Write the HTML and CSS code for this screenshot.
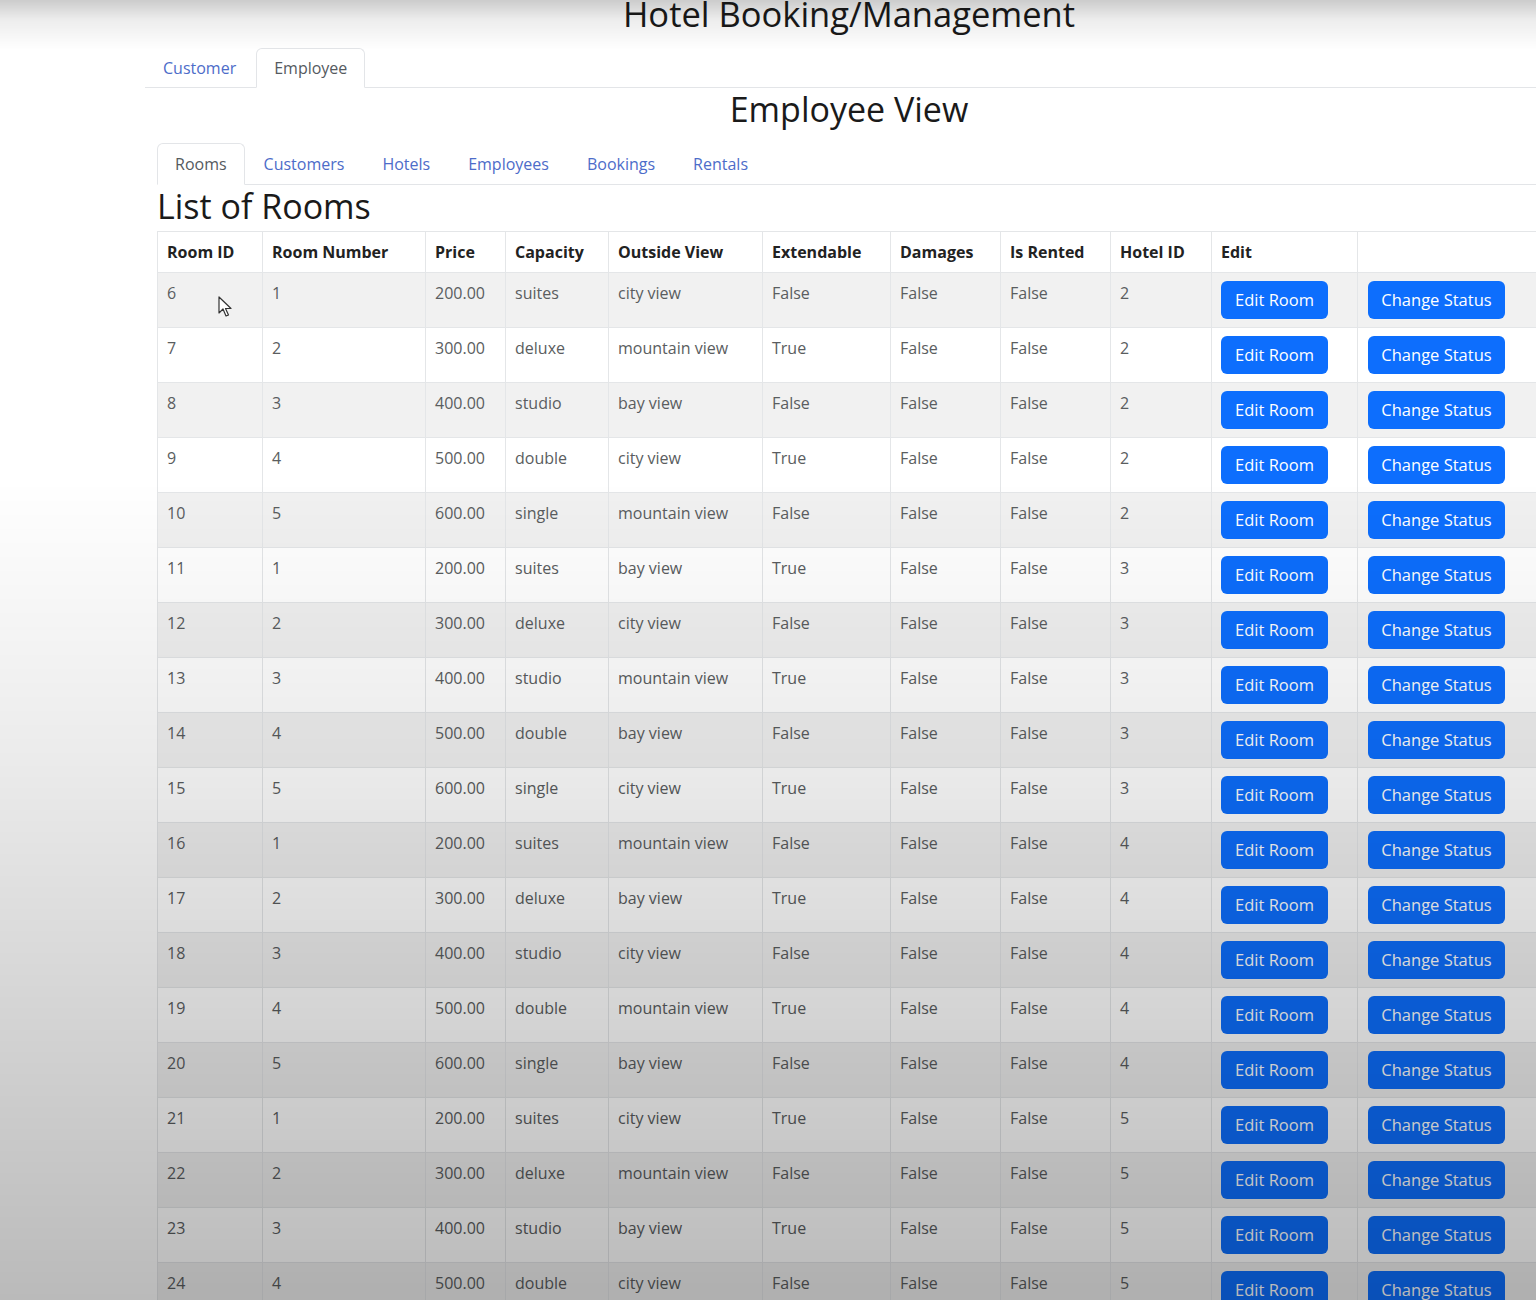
FILE: index.html
```html
<!DOCTYPE html>
<html lang="en">
<head>
<meta charset="utf-8">
<title>Hotel Booking/Management</title>
<link rel="stylesheet" href="styles.css">
</head>
<body>
<div class="page">
  <h1 class="title">Hotel Booking/Management</h1>
  <ul class="tabs top-tabs">
    <li><a class="tab-link">Customer</a></li>
    <li><a class="tab-link active">Employee</a></li>
  </ul>
  <section class="section">
    <h2 class="view-title">Employee View</h2>
    <ul class="tabs sub-tabs">
      <li><a class="tab-link active">Rooms</a></li>
      <li><a class="tab-link">Customers</a></li>
      <li><a class="tab-link">Hotels</a></li>
      <li><a class="tab-link">Employees</a></li>
      <li><a class="tab-link">Bookings</a></li>
      <li><a class="tab-link">Rentals</a></li>
    </ul>
    <h3 class="list-title">List of Rooms</h3>
    <table class="rooms">
      <colgroup>
        <col class="c-id"><col class="c-num"><col class="c-price"><col class="c-cap"><col class="c-view"><col class="c-ext"><col class="c-dmg"><col class="c-rent"><col class="c-hotel"><col class="c-edit"><col class="c-status">
      </colgroup>
      <thead>
        <tr><th>Room ID</th><th>Room Number</th><th>Price</th><th>Capacity</th><th>Outside View</th><th>Extendable</th><th>Damages</th><th>Is Rented</th><th>Hotel ID</th><th>Edit</th><th></th></tr>
      </thead>
      <tbody>
        <tr><td class="cursor-cell">6<svg class="cursor" width="14" height="22" viewBox="0 0 14 22"><path d="M1 1 L1 17 L5 13 L8 20 L10.5 19 L7.5 12.5 L13 12.5 Z" fill="#fff" stroke="#333" stroke-width="1.2" stroke-linejoin="round"/></svg></td><td>1</td><td>200.00</td><td>suites</td><td>city view</td><td>False</td><td>False</td><td>False</td><td>2</td><td><button class="btn btn-edit">Edit Room</button></td><td><button class="btn btn-status">Change Status</button></td></tr>
        <tr><td>7</td><td>2</td><td>300.00</td><td>deluxe</td><td>mountain view</td><td>True</td><td>False</td><td>False</td><td>2</td><td><button class="btn btn-edit">Edit Room</button></td><td><button class="btn btn-status">Change Status</button></td></tr>
        <tr><td>8</td><td>3</td><td>400.00</td><td>studio</td><td>bay view</td><td>False</td><td>False</td><td>False</td><td>2</td><td><button class="btn btn-edit">Edit Room</button></td><td><button class="btn btn-status">Change Status</button></td></tr>
        <tr><td>9</td><td>4</td><td>500.00</td><td>double</td><td>city view</td><td>True</td><td>False</td><td>False</td><td>2</td><td><button class="btn btn-edit">Edit Room</button></td><td><button class="btn btn-status">Change Status</button></td></tr>
        <tr><td>10</td><td>5</td><td>600.00</td><td>single</td><td>mountain view</td><td>False</td><td>False</td><td>False</td><td>2</td><td><button class="btn btn-edit">Edit Room</button></td><td><button class="btn btn-status">Change Status</button></td></tr>
        <tr><td>11</td><td>1</td><td>200.00</td><td>suites</td><td>bay view</td><td>True</td><td>False</td><td>False</td><td>3</td><td><button class="btn btn-edit">Edit Room</button></td><td><button class="btn btn-status">Change Status</button></td></tr>
        <tr><td>12</td><td>2</td><td>300.00</td><td>deluxe</td><td>city view</td><td>False</td><td>False</td><td>False</td><td>3</td><td><button class="btn btn-edit">Edit Room</button></td><td><button class="btn btn-status">Change Status</button></td></tr>
        <tr><td>13</td><td>3</td><td>400.00</td><td>studio</td><td>mountain view</td><td>True</td><td>False</td><td>False</td><td>3</td><td><button class="btn btn-edit">Edit Room</button></td><td><button class="btn btn-status">Change Status</button></td></tr>
        <tr><td>14</td><td>4</td><td>500.00</td><td>double</td><td>bay view</td><td>False</td><td>False</td><td>False</td><td>3</td><td><button class="btn btn-edit">Edit Room</button></td><td><button class="btn btn-status">Change Status</button></td></tr>
        <tr><td>15</td><td>5</td><td>600.00</td><td>single</td><td>city view</td><td>True</td><td>False</td><td>False</td><td>3</td><td><button class="btn btn-edit">Edit Room</button></td><td><button class="btn btn-status">Change Status</button></td></tr>
        <tr><td>16</td><td>1</td><td>200.00</td><td>suites</td><td>mountain view</td><td>False</td><td>False</td><td>False</td><td>4</td><td><button class="btn btn-edit">Edit Room</button></td><td><button class="btn btn-status">Change Status</button></td></tr>
        <tr><td>17</td><td>2</td><td>300.00</td><td>deluxe</td><td>bay view</td><td>True</td><td>False</td><td>False</td><td>4</td><td><button class="btn btn-edit">Edit Room</button></td><td><button class="btn btn-status">Change Status</button></td></tr>
        <tr><td>18</td><td>3</td><td>400.00</td><td>studio</td><td>city view</td><td>False</td><td>False</td><td>False</td><td>4</td><td><button class="btn btn-edit">Edit Room</button></td><td><button class="btn btn-status">Change Status</button></td></tr>
        <tr><td>19</td><td>4</td><td>500.00</td><td>double</td><td>mountain view</td><td>True</td><td>False</td><td>False</td><td>4</td><td><button class="btn btn-edit">Edit Room</button></td><td><button class="btn btn-status">Change Status</button></td></tr>
        <tr><td>20</td><td>5</td><td>600.00</td><td>single</td><td>bay view</td><td>False</td><td>False</td><td>False</td><td>4</td><td><button class="btn btn-edit">Edit Room</button></td><td><button class="btn btn-status">Change Status</button></td></tr>
        <tr><td>21</td><td>1</td><td>200.00</td><td>suites</td><td>city view</td><td>True</td><td>False</td><td>False</td><td>5</td><td><button class="btn btn-edit">Edit Room</button></td><td><button class="btn btn-status">Change Status</button></td></tr>
        <tr><td>22</td><td>2</td><td>300.00</td><td>deluxe</td><td>mountain view</td><td>False</td><td>False</td><td>False</td><td>5</td><td><button class="btn btn-edit">Edit Room</button></td><td><button class="btn btn-status">Change Status</button></td></tr>
        <tr><td>23</td><td>3</td><td>400.00</td><td>studio</td><td>bay view</td><td>True</td><td>False</td><td>False</td><td>5</td><td><button class="btn btn-edit">Edit Room</button></td><td><button class="btn btn-status">Change Status</button></td></tr>
        <tr><td>24</td><td>4</td><td>500.00</td><td>double</td><td>city view</td><td>False</td><td>False</td><td>False</td><td>5</td><td><button class="btn btn-edit">Edit Room</button></td><td><button class="btn btn-status">Change Status</button></td></tr>
      </tbody>
    </table>
  </section>
</div>
</body>
</html>
```

FILE: styles.css
```css
html, body {
  margin: 0;
  padding: 0;
  overflow: hidden;
  background: #ffffff;
}

body {
  font-family: "Open Sans", "Noto Sans", sans-serif;
  font-size: 16px;
  color: #212529;
  height: 1300px;
}

body::after {
  content: "";
  position: fixed;
  inset: 0;
  pointer-events: none;
  background:
    linear-gradient(to bottom, rgba(0,0,0,0.2) 0px, rgba(0,0,0,0.07) 20px, rgba(0,0,0,0) 50px, rgba(0,0,0,0) 480px, rgba(0,0,0,0.08) 760px, rgba(0,0,0,0.27) 1300px);
}

.page {
  margin-left: 145px;
  width: 1408px;
}

.title {
  margin: 0 0 20px;
  font-size: 34.5px;
  font-weight: 500;
  line-height: 28px;
  text-align: center;
  color: #1a1a1a;
}

.tabs {
  display: flex;
  list-style: none;
  margin: 0;
  padding: 0;
  border-bottom: 1px solid #e3e5e8;
}

.tabs li {
  margin-bottom: -1px;
}

.tab-link {
  display: block;
  padding: 8px 18px;
  line-height: 24px;
  font-size: 16px;
  color: #4d6cc9;
  border: 1px solid transparent;
  border-radius: 6px 6px 0 0;
  text-decoration: none;
}

.tab-link.active {
  color: #555a60;
  background: #fff;
  border-color: #e3e5e8 #e3e5e8 #fff;
}

.top-tabs .tab-link {
  padding: 7px 17px;
}

.top-tabs li:nth-child(2) {
  margin-left: 2px;
}

.section {
  padding: 0 12px;
}

.view-title {
  margin: 0 0 13px;
  font-size: 34px;
  font-weight: 500;
  line-height: 42px;
  text-align: center;
  color: #1a1a1a;
}

.sub-tabs li:first-child .tab-link {
  padding: 8px 17px;
}

.list-title {
  margin: 1px 0 5px;
  font-size: 34px;
  font-weight: 500;
  line-height: 40px;
  color: #1a1a1a;
}

.rooms {
  border-collapse: collapse;
  table-layout: fixed;
  width: 1384px;
}

.c-id { width: 105px; }
.c-num { width: 163px; }
.c-price { width: 80px; }
.c-cap { width: 103px; }
.c-view { width: 154px; }
.c-ext { width: 128px; }
.c-dmg { width: 110px; }
.c-rent { width: 110px; }
.c-hotel { width: 101px; }
.c-edit { width: 146px; }
.c-status { width: 184px; }

.rooms th,
.rooms td {
  border: 1px solid #e4e6e8;
  padding: 8px 9px;
  line-height: 24px;
  text-align: left;
  vertical-align: top;
  white-space: nowrap;
  overflow: hidden;
}

.rooms th {
  font-weight: 700;
  color: #222;
  font-size: 16px;
}

.rooms td {
  color: #5a5d60;
  font-size: 16px;
}

.rooms tbody tr:nth-child(odd) td {
  background: #f1f1f1;
}

.cursor-cell {
  position: relative;
}

.cursor {
  position: absolute;
  left: 60px;
  top: 23px;
}

.btn {
  display: inline-block;
  height: 38px;
  padding: 0 8px;
  border: none;
  border-radius: 6px;
  background: #0d6efd;
  color: #fff;
  font-family: "Open Sans", "Noto Sans", sans-serif;
  font-size: 16.5px;
  line-height: 38px;
  cursor: pointer;
  white-space: nowrap;
}

.btn-edit {
  width: 107px;
}

.btn-status {
  width: 137px;
  margin-left: 1px;
}
```
